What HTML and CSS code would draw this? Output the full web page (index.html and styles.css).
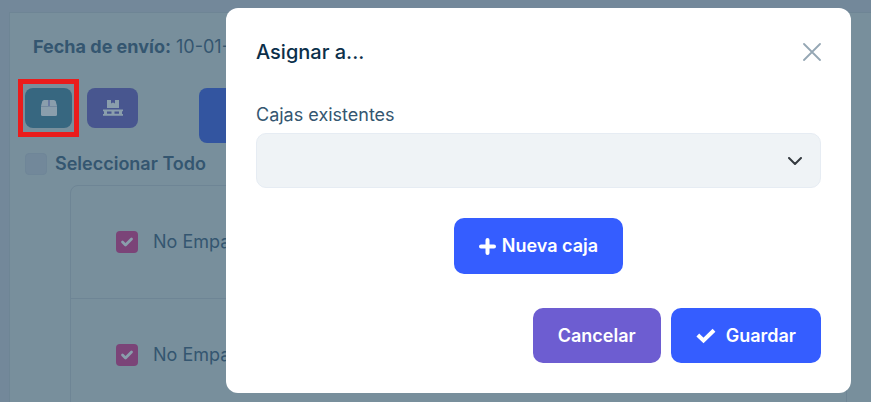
FILE: index.html
```html
<!DOCTYPE html>
<html lang="es">
<head>
<meta charset="utf-8">
<meta name="viewport" content="width=device-width, initial-scale=1">
<title>Asignar a...</title>
<link rel="stylesheet" href="styles.css">
</head>
<body>
<main class="panel">
  <p class="ship-date"><strong>Fecha de envío:</strong> 10-01-</p>
  <div class="toolbar">
    <button class="tool tool-box marked" type="button" aria-label="Asignar a caja">
      <svg width="16" height="16" viewBox="0 0 16 16" aria-hidden="true"><path fill="currentColor" d="M3.200 0H12.800Q14.300 0 14.800 1.500L16 6V14.500Q16 16 14.500 16H1.500Q0 16 0 14.500V6L1.200 1.500Q1.700 0 3.200 0Z"/><path d="M8 0V6.500" stroke="#53639a" stroke-width="1.200"/><path d="M0 6.500H16" stroke="#748a9f" stroke-width="1"/></svg>
    </button>
    <button class="tool tool-pallet" type="button" aria-label="Asignar a tarima">
      <svg width="20" height="16" viewBox="0 0 20 16" fill="currentColor" aria-hidden="true"><path d="M4 0H8V3.600L10 2.600L12 3.600V0H16V8H4ZM0 9.500H20V11.200H19V14H20V15.700H0V14H1V11.200H0ZM4 11.500V13.700H8.500V11.500ZM11.500 11.500V13.700H16V11.500Z" fill-rule="evenodd"/></svg>
    </button>
    <button class="tool tool-main" type="button" aria-label="Continuar"></button>
  </div>
  <label class="select-all"><input class="check" type="checkbox"><span>Seleccionar Todo</span></label>
  <ul class="rows">
    <li class="row"><label class="row-label"><input class="check" type="checkbox" checked><span>No Empaquetado</span></label></li>
    <li class="row"><label class="row-label"><input class="check" type="checkbox" checked><span>No Empaquetado</span></label></li>
  </ul>
</main>

<div class="overlay">
  <section class="modal" role="dialog" aria-modal="true" aria-labelledby="modal-title">
    <header class="modal-head">
      <h1 class="modal-title" id="modal-title">Asignar a...</h1>
      <button class="close" type="button" aria-label="Cerrar">
        <svg width="18" height="18" viewBox="0 0 18 18" fill="none" stroke="currentColor" stroke-width="1.800" stroke-linecap="round" aria-hidden="true"><path d="M1 1L17 17M17 1L1 17"/></svg>
      </button>
    </header>
    <div class="field">
      <label class="field-label" for="box">Cajas existentes</label>
      <div class="select-wrap">
        <select class="select" id="box"><option value=""></option></select>
        <svg class="chevron" width="14" height="8" viewBox="0 0 14 8" fill="none" stroke="currentColor" stroke-width="2" stroke-linecap="round" stroke-linejoin="round" aria-hidden="true"><path d="M1 1L7 7L13 1"/></svg>
      </div>
    </div>
    <button class="btn btn-primary btn-new" type="button">
      <svg width="17" height="17" viewBox="0 0 17 17" fill="none" stroke="currentColor" stroke-width="4" stroke-linecap="round" aria-hidden="true"><path d="M8.500 2V15M2 8.500H15"/></svg>
      Nueva caja
    </button>
    <footer class="modal-foot">
      <button class="btn btn-secondary" type="button">Cancelar</button>
      <button class="btn btn-primary btn-save" type="button">
        <svg width="20" height="16" viewBox="0 0 20 16" fill="none" stroke="currentColor" stroke-width="4" stroke-linejoin="miter" aria-hidden="true"><path d="M1.800 7L7.500 12.500L18 2.300"/></svg>
        Guardar
      </button>
    </footer>
  </section>
</div>
</body>
</html>
```
FILE: styles.css
```css
* {
  box-sizing: border-box;
}

body {
  margin: 0;
  height: 100vh;
  overflow: hidden;
  background: #73889a;
  color: #345670;
  font: 18px/24px Inter, "Liberation Sans", sans-serif;
}

button,
select {
  font: inherit;
}

/* Page behind the dialog */
.panel {
  min-height: 100vh;
  margin: 12px 0 0 9px;
  padding: 22px 24px 0 15px;
  border: 1px solid #6e8595;
  border-right: 0;
  background: #788f9c;
}

.ship-date {
  margin: 0 0 29px 8px;
}

.ship-date strong {
  font-weight: 700;
}

.toolbar {
  display: flex;
  align-items: flex-start;
  gap: 15px;
  height: 64px;
}

.tool {
  display: flex;
  align-items: center;
  justify-content: center;
  height: 40px;
  padding: 0;
  border: 0;
  border-radius: 8px;
  color: #8a9eac;
}

.tool-box {
  width: 47px;
  background: #376780;
}

.tool-pallet {
  width: 51px;
  background: #48568f;
}

.tool-main {
  width: 160px;
  height: 55px;
  margin-left: 46px;
  background: #3355a0;
}

.marked {
  position: relative;
}

.marked::after {
  content: "";
  position: absolute;
  inset: -9px -7px;
  border: 5px solid #ea1c1c;
}

.select-all {
  display: flex;
  align-items: center;
  gap: 8px;
  font-weight: 600;
}

.check {
  appearance: none;
  flex: none;
  width: 22px;
  height: 22px;
  margin: 0;
  border: 1px solid #6f8698;
  border-radius: 4px;
  background: #72889a;
}

.check:checked {
  border: 0;
  background: #7b4478 url("data:image/svg+xml,%3Csvg xmlns='http://www.w3.org/2000/svg' viewBox='0 0 22 22'%3E%3Cpath d='M6.500 11L9.500 14L15.500 8' fill='none' stroke='%238a9eac' stroke-width='2.800' stroke-linecap='round' stroke-linejoin='round'/%3E%3C/svg%3E");
}

.rows {
  margin: 9px 0 0 45px;
  padding: 0;
  border: 1px solid #6e8595;
  border-radius: 8px;
  list-style: none;
}

.row {
  display: flex;
  align-items: center;
  height: 112px;
  padding-left: 45px;
}

.row + .row {
  border-top: 1px solid #6e8595;
}

.row-label {
  display: flex;
  align-items: center;
  gap: 15px;
}

/* Dialog */
.overlay {
  position: fixed;
  inset: 0;
  display: flex;
  align-items: flex-start;
  justify-content: flex-end;
  padding: 8px 20px;
}

.modal {
  display: flex;
  flex-direction: column;
  width: 100%;
  max-width: 625px;
  padding: 30px;
  border-radius: 12px;
  background: #fff;
}

.modal-head {
  display: flex;
  align-items: center;
  justify-content: space-between;
  margin-bottom: 37px;
}

.modal-title {
  margin: 0;
  color: #0b2f4a;
  font-size: 20px;
  line-height: 28px;
  font-weight: 500;
}

.close {
  display: flex;
  padding: 0;
  border: 0;
  background: none;
  color: #95a7b4;
}

.field {
  display: flex;
  flex-direction: column;
  gap: 6px;
  margin-bottom: 30px;
}

.field-label {
  color: #345670;
}

.select-wrap {
  display: grid;
  align-items: center;
}

.select,
.chevron {
  grid-area: 1 / 1;
}

.select {
  appearance: none;
  width: 100%;
  height: 55px;
  padding: 0 48px 0 16px;
  border: 1px solid #e6ecf3;
  border-radius: 10px;
  background: #eff3f6;
}

.chevron {
  justify-self: end;
  margin-right: 19px;
  color: #343a40;
  pointer-events: none;
}

.btn {
  display: flex;
  align-items: center;
  justify-content: center;
  height: 55px;
  padding: 0 25px;
  border: 0;
  border-radius: 10px;
  color: #fff;
  font-weight: 600;
}

.btn-primary {
  background: #355dff;
}

.btn-secondary {
  background: #6d5dd1;
}

.btn-new {
  gap: 6px;
  align-self: center;
  height: 56px;
  margin-bottom: 34px;
}

.btn-save {
  gap: 10px;
}

.modal-foot {
  display: flex;
  justify-content: flex-end;
  gap: 10px;
}
```
